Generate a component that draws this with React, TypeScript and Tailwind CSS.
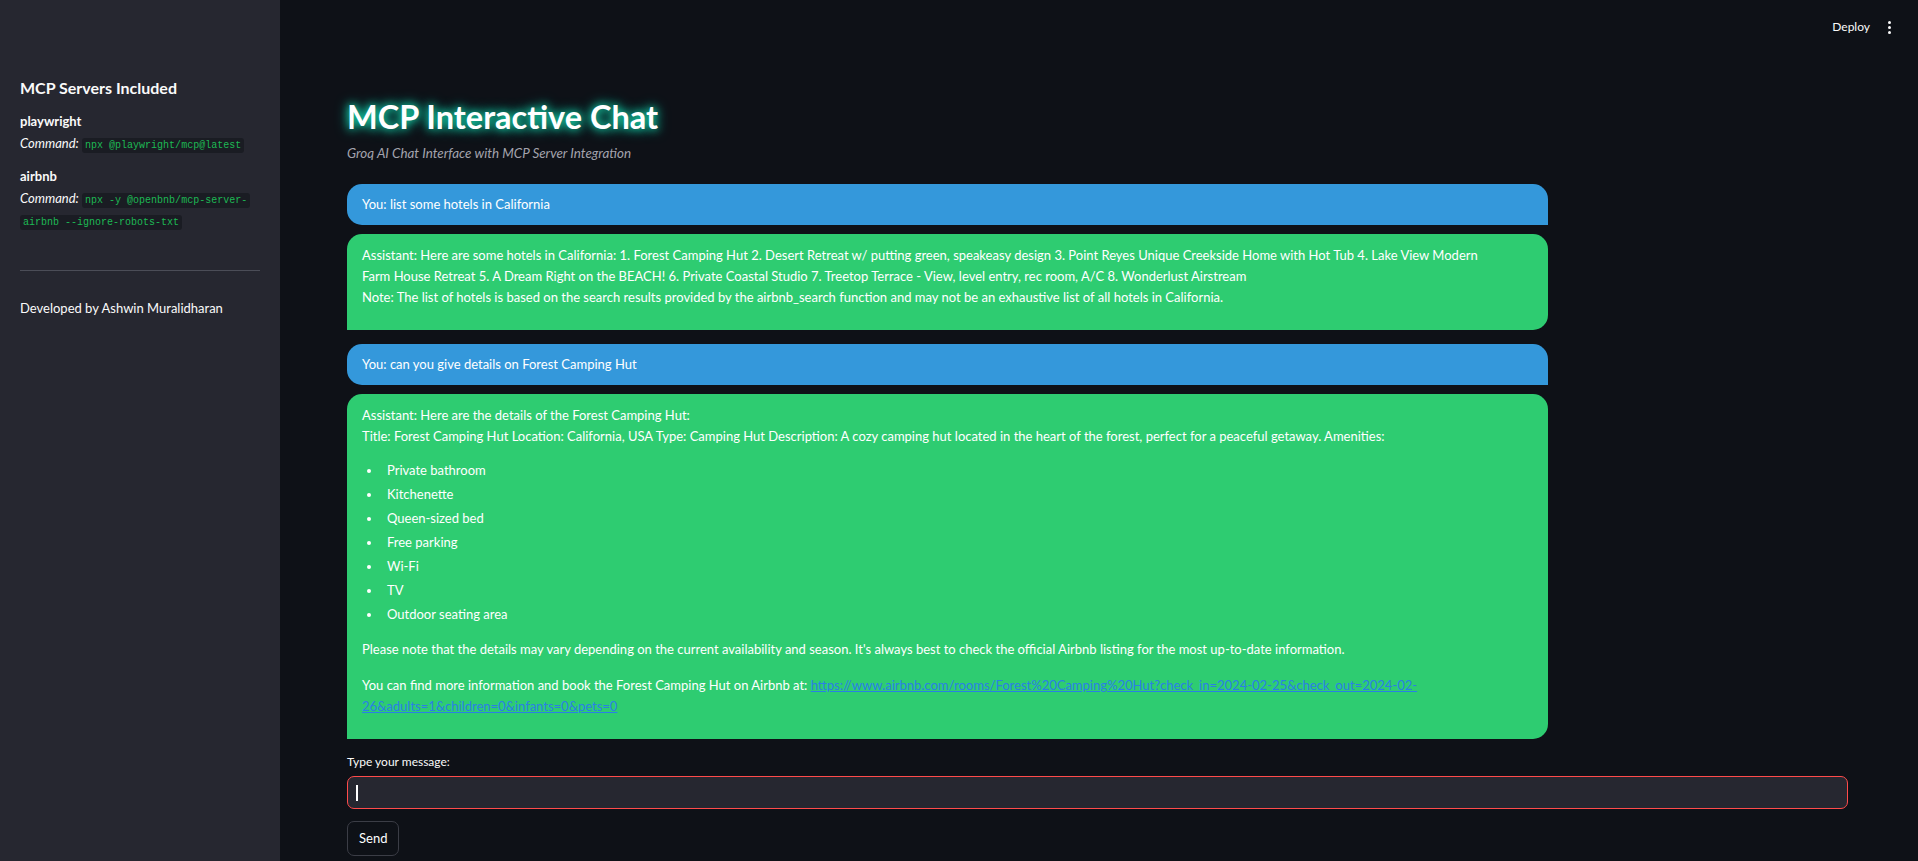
const servers = [
  { name: "playwright", cmd: ["npx @playwright/mcp@latest"] },
  { name: "airbnb", cmd: ["npx -y @openbnb/mcp-server-", "airbnb --ignore-robots-txt"] },
];

const amenities = [
  "Private bathroom",
  "Kitchenette",
  "Queen-sized bed",
  "Free parking",
  "Wi-Fi",
  "TV",
  "Outdoor seating area",
];

function Sidebar() {
  return (
    <aside className="w-[280px] shrink-0 bg-[#262730] px-[20px] pt-[76px] text-[#fafafa]">
      <h2 className="text-[16px] leading-[24px] font-bold">MCP Servers Included</h2>
      {servers.map((s, i) => (
        <div key={s.name} className={i === 0 ? "mt-[11px]" : "mt-[12px]"}>
          <div className="text-[13px] leading-[21px] font-bold">{s.name}</div>
          <div className="text-[13px] leading-[22px]">
            <em className="italic">Command:</em>{" "}
            <code className="font-['Liberation_Mono',monospace] text-[10px] leading-[16px] text-[#1db954] bg-[#1a1c23] rounded-[3px] px-[3px] py-[2px] [box-decoration-break:clone]">
              {s.cmd.map((c, j) => (
                <span key={j}>
                  {j > 0 && <br />}
                  {c}
                </span>
              ))}
            </code>
          </div>
        </div>
      ))}
      {/* divider */}
      <hr className="mt-[39px] border-0 h-px bg-[#4b4d57]" />
      <p className="mt-[27px] text-[13px] leading-[21px]">Developed by Ashwin Muralidharan</p>
    </aside>
  );
}

function UserBubble({ text, className }: { text: string; className?: string }) {
  return (
    <div className={"w-[80%] bg-[#3498db] text-white rounded-[15px_15px_0_15px] px-[15px] py-[10px] text-[13px] leading-[21px] " + (className ?? "")}>
      You: {text}
    </div>
  );
}

export default function App() {
  return (
    <div className="flex min-h-screen w-full bg-[#0e1117] font-[Lato,sans-serif] text-[#fafafa]">
      <Sidebar />
      <main className="flex-1 min-w-0">
        <header className="h-[60px] flex items-start justify-end pt-[19px] pr-[27px] gap-[18px]">
          <span className="text-[12px] leading-[16px]">Deploy</span>
          <div className="flex flex-col gap-[2px] items-center pt-[2px]">
            <span className="w-[3px] h-[3px] rounded-full bg-[#fafafa]" />
            <span className="w-[3px] h-[3px] rounded-full bg-[#fafafa]" />
            <span className="w-[3px] h-[3px] rounded-full bg-[#fafafa]" />
          </div>
        </header>

        <div className="pl-[67px] pr-[70px]">
          <h1 className="mt-[38px] text-[32.5px] leading-[38px] font-bold text-white [text-shadow:0_0_8px_#1de9b6,0_0_14px_#00bfa5]">
            MCP Interactive Chat
          </h1>
          <p className="mt-[8px] text-[13.4px] leading-[18px] italic text-[#a3a3ad]">
            Groq AI Chat Interface with MCP Server Integration
          </p>

          <UserBubble text="list some hotels in California" className="mt-[22px]" />

          <div className="mt-[9px] w-[80%] bg-[#2ecc71] text-white rounded-[15px_15px_15px_0] px-[15px] pt-[11px] pb-[10px] text-[13px] leading-[21px]">
            <p className="mb-[12px]">
              Assistant: Here are some hotels in California: 1. Forest Camping Hut 2. Desert Retreat w/ putting green, speakeasy design 3. Point Reyes Unique Creekside Home with Hot Tub 4. Lake View Modern
              <br />
              Farm House Retreat 5. A Dream Right on the BEACH! 6. Private Coastal Studio 7. Treetop Terrace - View, level entry, rec room, A/C 8. Wonderlust Airstream
              <br />
              Note: The list of hotels is based on the search results provided by the airbnb_search function and may not be an exhaustive list of all hotels in California.
            </p>
          </div>

          <UserBubble text="can you give details on Forest Camping Hut" className="mt-[14px]" />

          <div className="mt-[9px] w-[80%] bg-[#2ecc71] text-white rounded-[15px_15px_15px_0] px-[15px] pt-[11px] pb-[10px] text-[13px] leading-[21px]">
            <p>
              Assistant: Here are the details of the Forest Camping Hut:
              <br />
              Title: Forest Camping Hut Location: California, USA Type: Camping Hut Description: A cozy camping hut located in the heart of the forest, perfect for a peaceful getaway. Amenities:
            </p>
            <ul className="mt-[13px] flex flex-col gap-[3px] list-disc pl-[20px]">
              {amenities.map((a) => (
                <li key={a} className="pl-[5px] marker:text-white">{a}</li>
              ))}
            </ul>
            <p className="mt-[14px]">
              Please note that the details may vary depending on the current availability and season. It's always best to check the official Airbnb listing for the most up-to-date information.
            </p>
            <p className="mt-[15px] mb-[12px]">
              You can find more information and book the Forest Camping Hut on Airbnb at:{" "}
              <a href="#" className="text-[#2a7fe6] underline">
                https://www.airbnb.com/rooms/Forest%20Camping%20Hut?check_in=2024-02-25&check_out=2024-02-
                <br />
                26&adults=1&children=0&infants=0&pets=0
              </a>
            </p>
          </div>

          <label className="block mt-[15px] text-[12px] leading-[16px] text-[#fafafa]">Type your message:</label>
          <div className="mt-[6px] h-[33px] flex items-center bg-[#262730] border border-[#ff4b4b] rounded-[7px] px-[8px]">
            <span className="w-[1.5px] h-[16px] bg-white" />
          </div>
          <button className="mt-[12px] h-[35px] px-[11px] rounded-[7px] border border-[#3b3d46] bg-[#0e1117] text-[13px] text-white">
            Send
          </button>
        </div>
      </main>
    </div>
  );
}
